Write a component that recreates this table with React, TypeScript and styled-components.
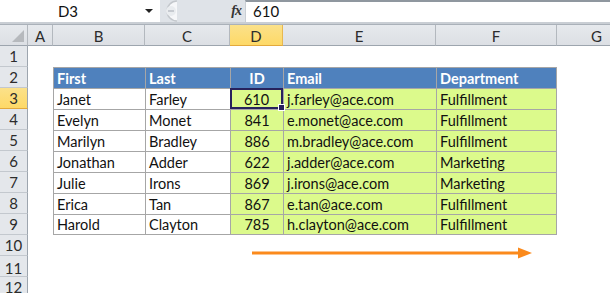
import React from "react";
import styled, { createGlobalStyle, css } from "styled-components";

const GlobalStyle = createGlobalStyle`
  html, body {
    margin: 0;
    padding: 0;
    background: #ffffff;
    overflow: hidden;
  }
  body {
    font-family: Lato, "Liberation Sans", sans-serif;
  }
`;

const Window = styled.div`
  width: 610px;
  height: 293px;
  overflow: hidden;
  background: #ffffff;
  display: flex;
  flex-direction: column;
`;

const FormulaBar = styled.div`
  display: flex;
  height: 22px;
  border-bottom: 2px solid #c9ced4;
`;

const NameBox = styled.div`
  width: 160px;
  display: flex;
  align-items: center;
  background: #ffffff;
  font-size: 15px;
  color: #111;
`;

const NameText = styled.span`
  flex: 1;
  text-align: center;
`;

const DropArrow = styled.span`
  width: 0;
  height: 0;
  border-left: 4px solid transparent;
  border-right: 4px solid transparent;
  border-top: 4px solid #222;
  margin-right: 7px;
  margin-left: 9px;
`;

const ToolZone = styled.div`
  width: 85px;
  background: #dfe3e8;
  display: flex;
  align-items: center;
  justify-content: space-between;
  padding-right: 4px;
  box-sizing: border-box;
`;

const Fx = styled.span`
  font-family: "Liberation Serif", serif;
  font-style: italic;
  font-weight: bold;
  font-size: 14px;
  color: #333;
  letter-spacing: -1px;
`;

const FormulaInput = styled.div`
  flex: 1;
  border-top: 2px solid #8f979f;
  border-left: 1px solid #c9ced4;
  font-size: 15px;
  color: #111;
  display: flex;
  align-items: center;
  padding-left: 7px;
  padding-bottom: 2px;
`;

const Spacer = styled.div`
  height: 3px;
  background: #ffffff;
  border-bottom: 1px solid #aab1b9;
`;

const SheetWrap = styled.div`
  position: relative;
  flex: 1;
`;

const Sheet = styled.div`
  display: grid;
  grid-template-columns: 28px 25px 92px 85px 53px 153px 121px 80px;
  grid-auto-rows: 21px;
  font-size: 14.5px;
`;

const ColHead = styled.div<{ $active?: boolean }>`
  display: flex;
  align-items: center;
  justify-content: center;
  padding-top: 1px;
  box-sizing: border-box;
  color: #2c2c2c;
  font-size: 15px;
  border-right: 1px solid #b3b8be;
  border-bottom: 1px solid #9da5ae;
  background: linear-gradient(#e6e9ed, #dcdfe4);
  ${(p) =>
    p.$active &&
    css`
      background: linear-gradient(#fbe18a, #fed967);
      border-right-color: #e8b850;
      border-bottom-color: #e3a93c;
    `}
`;

const Corner = styled(ColHead)`
  position: relative;
  &::after {
    content: "";
    position: absolute;
    right: 3px;
    bottom: 3px;
    width: 12px;
    height: 12px;
    background: #b6b9bd;
    clip-path: polygon(100% 0, 100% 100%, 0 100%);
  }
`;

const RowHead = styled.div<{ $active?: boolean; $low?: boolean }>`
  display: flex;
  align-items: ${(p) => (p.$low ? "flex-end" : "center")};
  justify-content: center;
  box-sizing: border-box;
  color: #2c2c2c;
  font-size: 15px;
  background: #e4e7eb;
  border-right: 1px solid #9da5ae;
  border-bottom: 1px solid #c3c8ce;
  line-height: 15px;
  ${(p) =>
    p.$active &&
    css`
      background: linear-gradient(#fbe18a, #fed967);
      border-bottom-color: #e3a93c;
    `}
`;

type Kind = "blank" | "head" | "white" | "green";

const Cell = styled.div<{
  $kind: Kind;
  $center?: boolean;
  $right?: boolean;
  $bottom?: boolean;
  $selected?: boolean;
}>`
  position: relative;
  box-sizing: border-box;
  display: flex;
  align-items: flex-end;
  justify-content: ${(p) => (p.$center ? "center" : "flex-start")};
  padding: 0 3px 1px 3px;
  white-space: nowrap;
  color: #111;
  background: ${(p) =>
    p.$kind === "head" ? "#4f81bd" : p.$kind === "green" ? "#dcfa8c" : "#ffffff"};
  ${(p) =>
    p.$kind !== "blank" &&
    css`
      border-left: 1px solid #a6a6a6;
      border-top: 1px solid #a6a6a6;
    `}
  ${(p) => p.$right && "border-right: 1px solid #a6a6a6;"}
  ${(p) => p.$bottom && "border-bottom: 1px solid #a6a6a6;"}
  ${(p) =>
    p.$kind === "head" &&
    css`
      color: #ffffff;
      font-weight: bold;
    `}
  ${(p) =>
    p.$selected &&
    css`
      border: none;
      box-shadow: inset 0 0 0 2px #27225c;
      &::after {
        content: "";
        position: absolute;
        right: -2px;
        bottom: -2px;
        width: 5px;
        height: 5px;
        background: #27225c;
        border: 1px solid #ffffff;
        z-index: 2;
      }
    `}
`;

const Arrow = styled.svg`
  position: absolute;
  left: 251px;
  top: 221px;
`;

const columns = ["A", "B", "C", "D", "E", "F", "G"];

const headers = ["First", "Last", "ID", "Email", "Department"];

const people = [
  ["Janet", "Farley", "610", "j.farley@ace.com", "Fulfillment"],
  ["Evelyn", "Monet", "841", "e.monet@ace.com", "Fulfillment"],
  ["Marilyn", "Bradley", "886", "m.bradley@ace.com", "Fulfillment"],
  ["Jonathan", "Adder", "622", "j.adder@ace.com", "Marketing"],
  ["Julie", "Irons", "869", "j.irons@ace.com", "Marketing"],
  ["Erica", "Tan", "867", "e.tan@ace.com", "Fulfillment"],
  ["Harold", "Clayton", "785", "h.clayton@ace.com", "Fulfillment"],
];

const App = () => {
  const tableRows = [headers, ...people];

  return (
    <Window>
      <GlobalStyle />
      <FormulaBar>
        <NameBox>
          <NameText>D3</NameText>
          <DropArrow />
        </NameBox>
        <ToolZone>
          <svg width="22" height="22" viewBox="0 0 22 22">
            <path d="M17 1 A10 10 0 0 0 17 21" fill="#f6f7f9" stroke="#c3c7cc" strokeWidth="1.5" />
            <circle cx="11" cy="11" r="5" fill="#e9ecef" />
            <rect x="8" y="10" width="6" height="2" fill="#c6cad0" />
          </svg>
          <Fx>fx</Fx>
        </ToolZone>
        <FormulaInput>610</FormulaInput>
      </FormulaBar>
      <Spacer />
      <SheetWrap>
        <Sheet>
          <Corner />
          {columns.map((c) => (
            <ColHead key={c} $active={c === "D"}>
              {c}
            </ColHead>
          ))}

          {Array.from({ length: 12 }, (_, i) => {
            const row = i + 1;
            const data = row >= 2 && row <= 9 ? tableRows[row - 2] : null;
            return (
              <React.Fragment key={row}>
                <RowHead $active={row === 3} $low={row === 11}>
                  {row}
                </RowHead>
                <Cell $kind="blank" />
                {data
                  ? data.map((v, j) => {
                      const kind: Kind =
                        row === 2 ? "head" : j >= 2 ? "green" : "white";
                      return (
                        <Cell
                          key={j}
                          $kind={kind}
                          $center={j === 2}
                          $right={j === 4}
                          $bottom={row === 9}
                          $selected={row === 3 && j === 2}
                        >
                          {v}
                        </Cell>
                      );
                    })
                  : headers.map((h) => <Cell key={h} $kind="blank" />)}
                <Cell $kind="blank" />
              </React.Fragment>
            );
          })}
        </Sheet>
        <Arrow width="284" height="14" viewBox="0 0 284 14">
          <line x1="1" y1="7" x2="270" y2="7" stroke="#fb8a1c" strokeWidth="3" />
          <polygon points="267,1.5 281,7 267,12.5" fill="#fb8a1c" />
        </Arrow>
      </SheetWrap>
    </Window>
  );
};

export default App;
